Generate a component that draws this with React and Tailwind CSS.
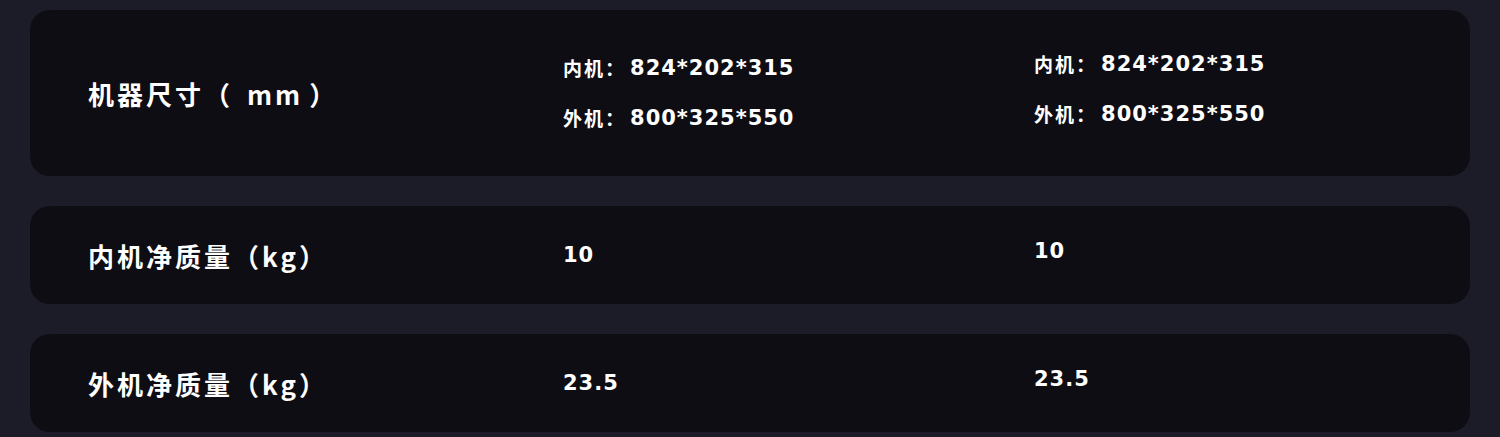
import React from "react";

const rows = [
  {
    label: "机器尺寸",
    unit: "mm",
    unitClass: "ml-[14px] mr-[6px]",
    tall: true,
    a: ["内机：824*202*315", "外机：800*325*550"],
    b: ["内机：824*202*315", "外机：800*325*550"],
  },
  { label: "内机净质量", unit: "kg", unitClass: "", a: ["10"], b: ["10"] },
  { label: "外机净质量", unit: "kg", unitClass: "", a: ["23.5"], b: ["23.5"] },
];

function Value({ lines, className = "" }) {
  return (
    <div className={`flex flex-col gap-[24px] ${className}`}>
      {lines.map((line, i) => {
        const idx = line.indexOf("：");
        return (
          <div key={i} className="flex items-center text-[21px] leading-[26px] font-bold text-white">
            {idx >= 0 && (
              <span className="font-['Noto_Sans_CJK_SC',sans-serif] text-[19px] tracking-[2px] mr-[4px]">
                {line.slice(0, idx + 1)}
              </span>
            )}
            <span className="font-['DejaVu_Sans','Noto_Sans_CJK_SC',sans-serif] tracking-[1px]">
              {idx >= 0 ? line.slice(idx + 1) : line}
            </span>
          </div>
        );
      })}
    </div>
  );
}

export default function App() {
  return (
    <div className="w-[1500px] h-[437px] overflow-hidden bg-[#1c1b28] px-[30px] pt-[10px] flex flex-col gap-[30px]">
      {rows.map((r, i) => (
        <div
          key={i}
          className={`grid grid-cols-[475px_471px_1fr] items-center pl-[58px] rounded-[20px] bg-[#0e0d13] ${r.tall ? "h-[166px]" : "h-[98px]"}`}
        >
          <div className="font-['Noto_Sans_CJK_SC',sans-serif] font-bold text-white text-[26px] tracking-[3px]">
            {r.label}（<span className={r.unitClass}>{r.unit}</span>）
          </div>
          <Value lines={r.a} />
          <Value lines={r.b} className="mb-2" />
        </div>
      ))}
    </div>
  );
}
